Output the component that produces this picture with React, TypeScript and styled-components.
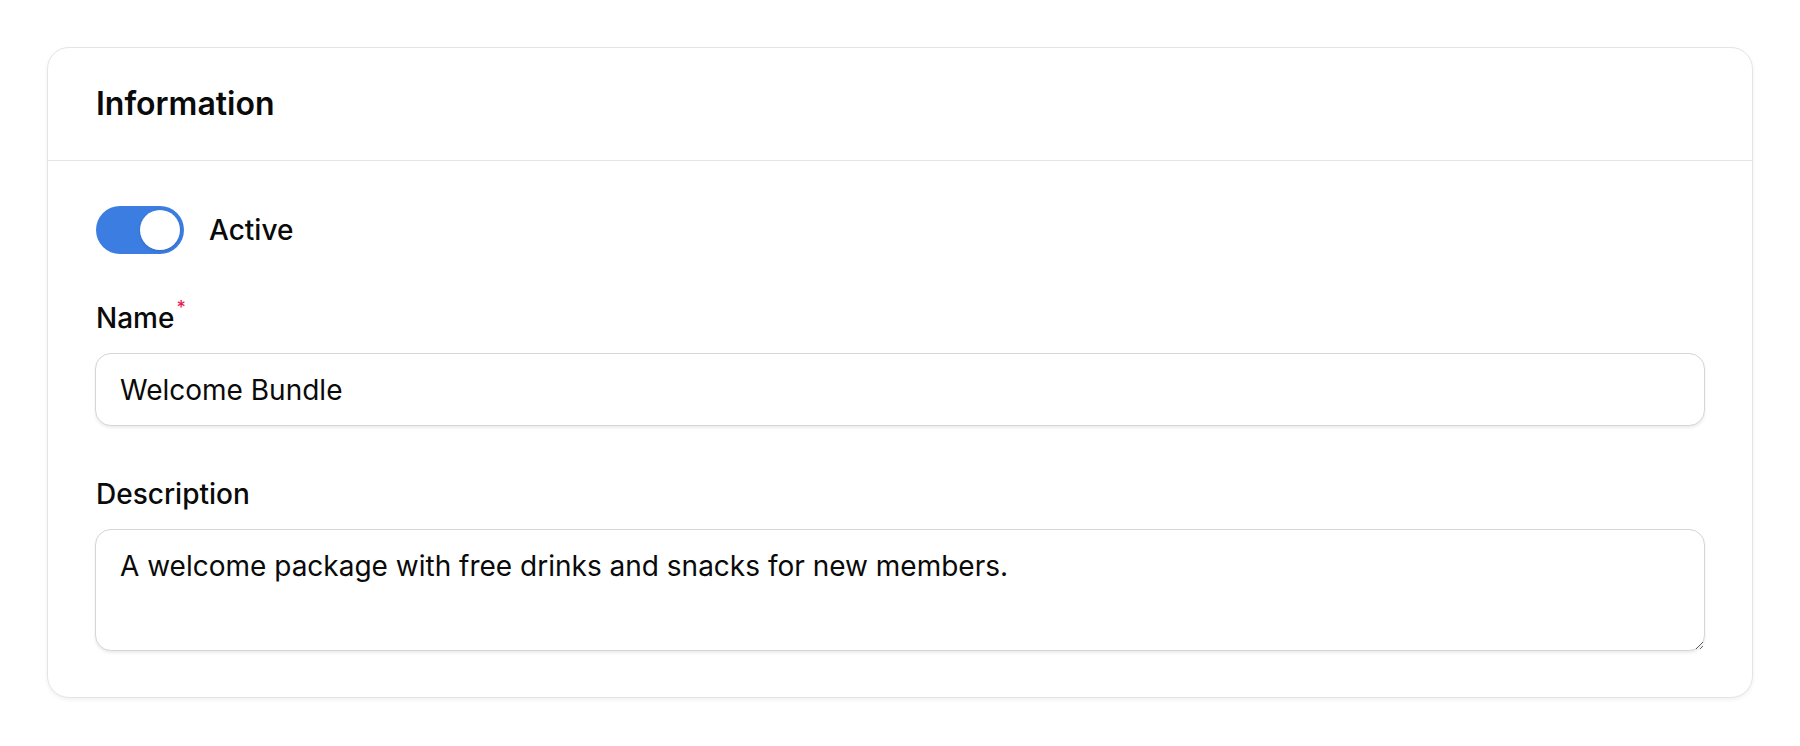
import { useState } from 'react';
import styled, { createGlobalStyle } from 'styled-components';

const GlobalStyle = createGlobalStyle`
  html, body {
    margin: 0;
    padding: 0;
    background: #ffffff;
  }
  body {
    font-family: Inter, "Noto Sans", "Liberation Sans", sans-serif;
    color: #0a0a0a;
    -webkit-font-smoothing: antialiased;
  }
  * {
    box-sizing: border-box;
  }
`;

export default function App() {
  const [active, setActive] = useState(true);
  const [name, setName] = useState('Welcome Bundle');
  const [description, setDescription] = useState(
    'A welcome package with free drinks and snacks for new members.'
  );

  return (
    <Page>
      <GlobalStyle />
      <Card>
        <CardHeader>
          <Title>Information</Title>
        </CardHeader>
        <CardBody>
          <SwitchRow>
            <Switch
              type="button"
              role="switch"
              aria-checked={active}
              $on={active}
              onClick={() => setActive(!active)}
            >
              <Knob $on={active} />
            </Switch>
            <SwitchLabel>Active</SwitchLabel>
          </SwitchRow>

          <Fields>
            <Field>
              <Label htmlFor="name">
                Name<Required>*</Required>
              </Label>
              <Input id="name" value={name} onChange={(e) => setName(e.target.value)} />
            </Field>

            <Field>
              <Label htmlFor="description">Description</Label>
              <TextArea
                id="description"
                rows={2}
                value={description}
                onChange={(e) => setDescription(e.target.value)}
              />
            </Field>
          </Fields>
        </CardBody>
      </Card>
    </Page>
  );
}

const Page = styled.div`
  padding: 47px;
`;

const Card = styled.section`
  background: #fff;
  border: 1px solid #e4e4e4;
  border-radius: 22px;
  box-shadow: 0 2px 4px rgba(0, 0, 0, 0.06);
`;

const CardHeader = styled.header`
  padding: 32px 47px 32px 48px;
  border-bottom: 1px solid #e4e4e4;
`;

const Title = styled.h2`
  margin: 0;
  font-size: 32px;
  line-height: 48px;
  font-weight: 600;
`;

const CardBody = styled.div`
  display: flex;
  flex-direction: column;
  padding: 45px 47px 46px;
  gap: 44px;
`;

const SwitchRow = styled.div`
  display: flex;
  align-items: center;
  gap: 25px;
`;

const Switch = styled.button<{ $on: boolean }>`
  position: relative;
  width: 88px;
  height: 48px;
  padding: 0;
  margin-left: 1px;
  border: none;
  border-radius: 24px;
  background: ${(p) => (p.$on ? '#3b7de0' : '#d4d4d4')};
  cursor: pointer;
`;

const Knob = styled.span<{ $on: boolean }>`
  position: absolute;
  top: 4px;
  left: ${(p) => (p.$on ? '44px' : '4px')};
  width: 40px;
  height: 40px;
  border-radius: 50%;
  background: #fff;
  box-shadow: 0 1px 3px rgba(0, 0, 0, 0.15);
`;

const SwitchLabel = styled.span`
  font-size: 28px;
  line-height: 40px;
  font-weight: 500;
`;

const Fields = styled.div`
  display: flex;
  flex-direction: column;
  gap: 48px;
`;

const Field = styled.div`
  display: flex;
  flex-direction: column;
  gap: 15px;
`;

const Label = styled.label`
  padding-left: 1px;
  font-size: 28px;
  line-height: 40px;
  font-weight: 500;
`;

const Required = styled.sup`
  color: #ee1a58;
  font-size: 18px;
  line-height: 0;
  margin-left: 2px;
  vertical-align: 14px;
`;

const controlBase = `
  width: 100%;
  font-family: Inter, "Noto Sans", "Liberation Sans", sans-serif;
  font-size: 28px;
  color: #0a0a0a;
  background: #fff;
  border: 1px solid #d6d6d6;
  border-radius: 16px;
  box-shadow: 0 2px 3px rgba(0, 0, 0, 0.08);
  outline: none;
`;

const Input = styled.input`
  ${controlBase}
  height: 73px;
  padding: 0 24px;
`;

const TextArea = styled.textarea`
  ${controlBase}
  height: 122px;
  padding: 16px 24px;
  line-height: 40px;
  resize: vertical;
`;
